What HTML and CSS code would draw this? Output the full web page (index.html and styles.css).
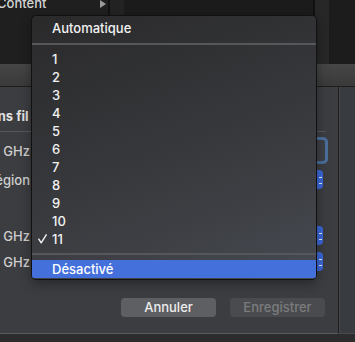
FILE: index.html
```html
<!DOCTYPE html>
<html lang="fr">
<head>
    <meta charset="UTF-8">
    <meta name="viewport" content="width=device-width, initial-scale=1.0">
    <title>Menu canal Wi-Fi</title>
    <link rel="stylesheet" href="styles.css">
</head>
<body>
    <div class="screen">
        <!-- Window behind the sheet -->
        <div class="top">
            <div class="sidebar">
                <div class="side-item">
                    <span class="side-label">Content</span>
                    <svg class="disclosure" width="6" height="8" viewBox="0 0 6 8"><polygon points="0,0 6,4 0,8" /></svg>
                </div>
            </div>
            <div class="vline"></div>
            <div class="strip"></div>
            <div class="list"></div>
            <div class="vline"></div>
            <div class="strip strip-right"></div>
            <div class="rest"></div>
        </div>

        <div class="band"></div>

        <div class="work">
            <!-- Sheet -->
            <div class="sheet">
                <div class="sheet-title">Options sans fil</div>
                <div class="rule"></div>

                <div class="form-row row-field">
                    <div class="label">Canal 2,4 GHz</div>
                    <div class="textfield"></div>
                </div>
                <div class="form-row row-region">
                    <div class="label">Région</div>
                    <div class="popup"><span class="chev"></span></div>
                </div>
                <div class="form-row row-width">
                    <div class="label">Largeur 2,4 GHz</div>
                    <div class="popup"><span class="chev"></span></div>
                </div>
                <div class="form-row">
                    <div class="label">Largeur 5 GHz</div>
                    <div class="popup"><span class="chev"></span></div>
                </div>

                <div class="buttons">
                    <button class="btn">Annuler</button>
                    <button class="btn btn-disabled">Enregistrer</button>
                </div>
            </div>
            <div class="side-panel"></div>
        </div>

        <div class="bottom"></div>

        <!-- Popup menu -->
        <div class="menu">
            <div class="item"><span class="mark"></span>Automatique</div>
            <div class="sep"></div>
            <div class="item"><span class="mark"></span>1</div>
            <div class="item"><span class="mark"></span>2</div>
            <div class="item"><span class="mark"></span>3</div>
            <div class="item"><span class="mark"></span>4</div>
            <div class="item"><span class="mark"></span>5</div>
            <div class="item"><span class="mark"></span>6</div>
            <div class="item"><span class="mark"></span>7</div>
            <div class="item"><span class="mark"></span>8</div>
            <div class="item"><span class="mark"></span>9</div>
            <div class="item"><span class="mark"></span>10</div>
            <div class="item"><span class="mark"><svg width="9" height="10" viewBox="0 0 9 10"><polyline points="0.8,5.2 3.2,8.8 8.2,0.8" /></svg></span>11</div>
            <div class="sep sep-low"></div>
            <div class="item item-active"><span class="mark"></span>Désactivé</div>
        </div>
    </div>
</body>
</html>
```

FILE: styles.css
```css
body, html {
    margin: 0;
    height: 100%;
    background-color: #1c1c1c;
    overflow: hidden;
}

.screen {
    position: relative;
    width: 355px;
    height: 342px;
    overflow: hidden;
    font-family: "Inter", "Noto Sans", sans-serif;
    font-size: 13px;
    display: flex;
    flex-direction: column;
}

/* Window behind */
.top {
    height: 64px;
    display: flex;
    flex-shrink: 0;
}

.sidebar {
    width: 108px;
    background-color: #1f1f1f;
}

.side-item {
    display: flex;
    align-items: center;
    justify-content: space-between;
    height: 16px;
    margin-top: -5px;
    margin-left: -3px;
    padding-right: 2px;
}

.side-label {
    color: #d6d6d6;
    font-weight: 500;
}

.disclosure {
    fill: #9a9a9a;
    margin-top: 2px;
}

.vline {
    width: 2px;
    background-color: #121212;
}

.strip {
    width: 14px;
    background-color: #232323;
}

.strip-right {
    background-color: #272727;
}

.list {
    flex: 1;
    background-color: #1b1b1b;
}

.rest {
    width: 26px;
    background-color: #1c1c1c;
}

.band {
    height: 22px;
    flex-shrink: 0;
    background: linear-gradient(#464646, #3a3a3a);
    border-bottom: 1px solid #1e1e1e;
}

.work {
    display: flex;
    height: 247px;
    flex-shrink: 0;
}

/* Sheet */
.sheet {
    width: 338px;
    background-color: #3b3d40;
    border-right: 1px solid #1d1d1e;
    border-bottom: 1px solid #5a5b5e;
    display: flex;
    flex-direction: column;
}

.side-panel {
    flex: 1;
    background-color: #383b3f;
    border-left: 1px solid #46484c;
    border-bottom: 1px solid #4a4b4e;
}

.sheet-title {
    margin-top: 21px;
    margin-left: -70px;
    color: #e2e2e2;
    font-weight: 700;
    white-space: nowrap;
    line-height: 16px;
}

.rule {
    height: 1px;
    margin-top: 7px;
    margin-right: 12px;
    background-color: #55575b;
}

.form-row {
    display: flex;
    align-items: center;
    justify-content: space-between;
    height: 19px;
    margin-top: 7px;
}

.row-field {
    height: 27px;
    margin-top: 5px;
}

.row-region {
    margin-top: 6px;
}

.row-width {
    margin-top: 37px;
}

.label {
    width: 30px;
    display: flex;
    justify-content: flex-end;
    white-space: nowrap;
    color: #cfcfcf;
    font-weight: 500;
}

.textfield {
    width: 280px;
    height: 21px;
    margin-right: 10px;
    border: 3px solid #4a6d9b;
    border-radius: 5px;
    background-color: #3c3f44;
}

.popup {
    position: relative;
    width: 270px;
    height: 19px;
    margin-right: 15px;
    border-radius: 4px;
    background-color: #3a66d8;
}

.chev {
    position: absolute;
    right: 2px;
    top: 7px;
    width: 2px;
    height: 5px;
    border-top: 1px dotted #e8eefc;
    border-bottom: 1px dotted #e8eefc;
}

.buttons {
    display: flex;
    justify-content: flex-end;
    gap: 14px;
    margin-top: 27px;
    padding-right: 13px;
}

.btn {
    width: 95px;
    height: 19px;
    padding: 0;
    border: none;
    border-radius: 4px;
    background-color: #5e5f62;
    color: #ececec;
    font-family: inherit;
    font-size: 13px;
    font-weight: 500;
    line-height: 19px;
}

.btn-disabled {
    background-color: #4a4b4e;
    color: #7b7c7e;
}

.bottom {
    flex: 1;
    background-color: #2c2c2d;
}

/* Popup menu */
.menu {
    position: absolute;
    left: 31px;
    top: 15px;
    width: 286px;
    height: 265px;
    box-sizing: border-box;
    padding-top: 3px;
    border-radius: 5px;
    border: 1px solid #111;
    background: linear-gradient(160deg, #2a2a2b 0%, #343538 40%, #3e4045 75%, #464b52 100%);
    box-shadow: 0 4px 12px rgba(0, 0, 0, 0.35);
    overflow: hidden;
}

.item {
    display: flex;
    align-items: center;
    height: 18px;
    color: #f2f2f2;
    font-weight: 500;
    line-height: 18px;
}

.mark {
    width: 20px;
    display: flex;
    justify-content: flex-end;
}

.mark svg {
    margin-right: 5px;
    fill: none;
    stroke: #f2f2f2;
    stroke-width: 1.4;
    stroke-linecap: round;
    stroke-linejoin: round;
}

.item-active {
    background-color: #4470dc;
    color: #ffffff;
}

.sep {
    height: 2px;
    margin: 6px 0 5px;
    background-color: #56575a;
}

.sep-low {
    margin: 5px 0 5px;
}
```
